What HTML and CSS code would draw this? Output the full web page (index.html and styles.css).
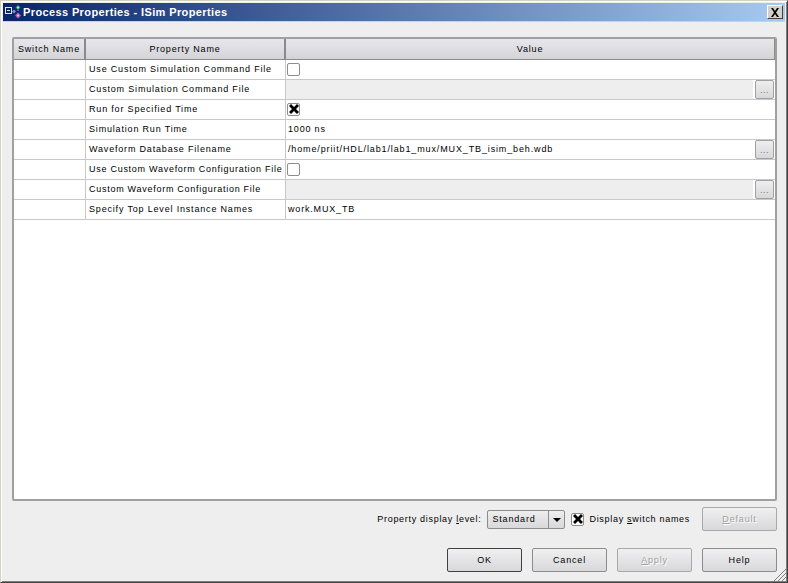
FILE: index.html
```html
<!DOCTYPE html>
<html lang="en">
<head>
  <meta charset="UTF-8" />
  <title>Process Properties - ISim Properties</title>
  <link rel="stylesheet" href="styles.css">
</head>
<body>
  <div class="window">
    <div class="titlebar">
      <svg class="sys-icon" width="20" height="18" viewBox="0 1 20 18">
        <rect x="2.500" y="5.500" width="6" height="6" fill="#0a246a" stroke="#dfe4f0"/>
        <path d="M4 8.500h3" stroke="#dfe4f0"/>
        <path d="M15 3l2.500 2.500L15 8l-2.500-2.500z" fill="#3a9a78"/>
        <path d="M15 10.500l3 3-3 3-3-3z" fill="#c060a8"/>
        <path d="M11 7.500l2 2-2 2-2-2z" fill="#8090c8"/>
        <path d="M15 9l1-.5-1-.5-1 .5z" fill="#a0a8d0"/>
        <circle cx="15" cy="5.500" r="1" fill="#b0f0c0"/>
        <circle cx="15" cy="13.500" r="1" fill="#f0c0e0"/>
      </svg>
      <span class="title-text">Process Properties - ISim Properties</span>
      <div class="close-btn">
        <svg width="10" height="9" viewBox="0 0 10 9"><path d="M1 0h2l2 3 2-3h2L6 4.500 9 9H7L5 6 3 9H1l3-4.500z" fill="#000"/></svg>
      </div>
    </div>

    <div class="body">
      <div class="grid-frame">
        <div class="row head">
          <div class="cell c-switch">Switch Name</div>
          <div class="cell c-name">Property Name</div>
          <div class="cell c-value">Value</div>
        </div>

        <div class="row">
          <div class="cell c-switch"></div>
          <div class="cell c-name">Use Custom Simulation Command File</div>
          <div class="cell c-value"><span class="check"></span></div>
        </div>
        <div class="row">
          <div class="cell c-switch"></div>
          <div class="cell c-name">Custom Simulation Command File</div>
          <div class="cell c-value"><div class="file-field off"></div><div class="dots">...</div></div>
        </div>
        <div class="row">
          <div class="cell c-switch"></div>
          <div class="cell c-name">Run for Specified Time</div>
          <div class="cell c-value">
            <span class="check"><svg width="10" height="10" viewBox="0 0 10 10"><path d="M0 2l2-2 3 3 3-3 2 2-3 3 3 3-2 2-3-3-3 3-2-2 3-3z" fill="#000"/></svg></span>
          </div>
        </div>
        <div class="row">
          <div class="cell c-switch"></div>
          <div class="cell c-name">Simulation Run Time</div>
          <div class="cell c-value">1000 ns</div>
        </div>
        <div class="row">
          <div class="cell c-switch"></div>
          <div class="cell c-name">Waveform Database Filename</div>
          <div class="cell c-value"><div class="file-field path">/home/priit/HDL/lab1/lab1_mux/MUX_TB_isim_beh.wdb</div><div class="dots">...</div></div>
        </div>
        <div class="row">
          <div class="cell c-switch"></div>
          <div class="cell c-name tight">Use Custom Waveform Configuration File</div>
          <div class="cell c-value"><span class="check"></span></div>
        </div>
        <div class="row">
          <div class="cell c-switch"></div>
          <div class="cell c-name tight">Custom Waveform Configuration File</div>
          <div class="cell c-value"><div class="file-field off"></div><div class="dots">...</div></div>
        </div>
        <div class="row">
          <div class="cell c-switch"></div>
          <div class="cell c-name">Specify Top Level Instance Names</div>
          <div class="cell c-value">work.MUX_TB</div>
        </div>
      </div>

      <div class="options">
        <span class="label">Property display <u>l</u>evel:</span>
        <div class="combo">
          <span class="combo-text">Standard</span>
          <span class="combo-arrow"></span>
        </div>
        <span class="check small-gap"><svg width="10" height="10" viewBox="0 0 10 10"><path d="M0 2l2-2 3 3 3-3 2 2-3 3 3 3-2 2-3-3-3 3-2-2 3-3z" fill="#000"/></svg></span>
        <span class="label">Display <u>s</u>witch names</span>
        <div class="btn disabled default-btn"><span><u>D</u>efault</span></div>
      </div>

      <div class="actions">
        <div class="btn focus">OK</div>
        <div class="btn">Cancel</div>
        <div class="btn disabled"><span><u>A</u>pply</span></div>
        <div class="btn">Help</div>
      </div>
    </div>

    <svg class="grip" width="13" height="13" viewBox="0 0 13 13">
      <path d="M13 1L1 13M13 5L5 13M13 9L9 13" stroke="#808080"/>
    </svg>
  </div>
</body>
</html>
```

FILE: styles.css
```css
html, body {
  margin: 0;
  padding: 0;
  background: #eeeeee;
}
body {
  font-family: "Liberation Sans", Arial, sans-serif;
  font-size: 9px;
  letter-spacing: 0.82px;
  color: #000;
}
.window {
  position: relative;
  width: 788px;
  height: 583px;
  box-sizing: border-box;
  border: 1px solid #404040;
  border-top-color: #d4d0c8;
  border-left-color: #d4d0c8;
  box-shadow: inset 1px 1px 0 #fff, inset -1px -1px 0 #808080;
  background: #eeeeee;
  padding: 2px 2px 2px 2px;
  display: flex;
  flex-direction: column;
}
.titlebar {
  height: 18px;
  flex: none;
  display: flex;
  align-items: center;
  background: linear-gradient(to right, #0a246a, #a6caf0);
  padding-right: 2px;
  box-shadow: 0 1px 0 #d4d0c8;
}
.sys-icon {
  flex: none;
}
.title-text {
  color: #fff;
  font-weight: bold;
  font-size: 11px;
  letter-spacing: 0.38px;
  flex: 1;
}
.close-btn {
  width: 16px;
  height: 14px;
  box-sizing: border-box;
  background: #d4d0c8;
  border: 1px solid #404040;
  border-top-color: #fff;
  border-left-color: #fff;
  display: flex;
  align-items: center;
  justify-content: center;
}
.body {
  flex: 1;
  display: flex;
  flex-direction: column;
  padding: 16px 8px 0 9px;
  min-height: 0;
}
.grid-frame {
  height: 464px;
  box-sizing: border-box;
  background: #fff;
  border: 2px solid #a0a0a0;
  border-radius: 2px;
}
.row {
  display: flex;
  height: 20px;
  box-sizing: border-box;
  border-bottom: 1px solid #c8c8c8;
}
.row.head {
  height: 21px;
  border-bottom: 1px solid #8a8a8a;
  background: linear-gradient(to bottom, #e6e6ec, #d4d4d8);
}
.cell {
  display: flex;
  align-items: center;
  box-sizing: border-box;
  border-right: 1px solid #c8c8c8;
  padding-bottom: 1px;
  white-space: nowrap;
  overflow: hidden;
}
.c-switch {
  width: 72px;
  flex: none;
}
.c-name {
  width: 200px;
  flex: none;
  padding-left: 3px;
}
.c-name.tight {
  letter-spacing: 0.73px;
}
.c-value {
  flex: 1;
  border-right: none;
  padding-left: 2px;
}
.head .cell {
  justify-content: center;
  padding: 0 0 1px;
  border-right: 2px solid #8a8a8a;
}
.head .c-value {
  border-right: 1px solid #8a8a8a;
}
.check {
  display: inline-flex;
  align-items: center;
  justify-content: center;
  width: 13px;
  height: 13px;
  box-sizing: border-box;
  background: #fff;
  border: 1px solid #8c8c8c;
  border-radius: 2px;
  flex: none;
  margin-left: -1px;
}
.file-field {
  flex: 1;
  align-self: stretch;
  display: flex;
  align-items: center;
  margin: 0 2px 0 -2px;
  padding-left: 2px;
}
.file-field.off {
  background: #eeeeee;
  margin-bottom: -1px;
}
.file-field.path {
  letter-spacing: 0.87px;
}
.dots {
  width: 19px;
  height: 19px;
  box-sizing: border-box;
  flex: none;
  border: 1px solid #a0a0a0;
  border-radius: 2px;
  background: linear-gradient(to bottom, #eeeeee, #d8d8dc);
  color: #777;
  text-align: center;
  line-height: 18px;
  letter-spacing: 0.5px;
  margin: 0 1px -1px 0;
}
.options {
  display: flex;
  align-items: center;
  justify-content: flex-end;
  margin-top: 6px;
  height: 24px;
  letter-spacing: 0.7px;
}
.label {
  white-space: nowrap;
}
.combo {
  display: flex;
  width: 78px;
  height: 19px;
  box-sizing: border-box;
  margin-left: 6px;
  border: 1px solid #8c8c8c;
  border-radius: 2px;
  background: linear-gradient(to bottom, #eeeeee, #d8d8dc);
  align-items: center;
  letter-spacing: 0.82px;
}
.combo-text {
  flex: 1;
  padding-left: 4px;
}
.combo-arrow {
  width: 16px;
  height: 100%;
  box-sizing: border-box;
  border-left: 1px solid #8c8c8c;
  position: relative;
}
.combo-arrow::after {
  content: "";
  position: absolute;
  left: 4px;
  top: 7px;
  border-left: 4px solid transparent;
  border-right: 4px solid transparent;
  border-top: 4px solid #000;
}
.small-gap {
  margin-left: 6px;
  margin-right: 5px;
}
.btn {
  width: 75px;
  height: 24px;
  box-sizing: border-box;
  display: flex;
  align-items: center;
  justify-content: center;
  border: 1px solid #8c8c8c;
  border-radius: 2px;
  background: linear-gradient(to bottom, #f0f0f0, #d8d8dc);
  letter-spacing: 0.82px;
}
.btn.focus {
  border-color: #404040;
}
.btn.disabled {
  color: #a0a0a0;
  border-color: #a8a8a8;
  text-shadow: 1px 1px 0 #fff;
}
.default-btn {
  margin-left: 12px;
}
.actions {
  display: flex;
  justify-content: flex-end;
  gap: 10px;
  margin-top: 17px;
}
.grip {
  position: absolute;
  right: 1px;
  bottom: 1px;
}
```
